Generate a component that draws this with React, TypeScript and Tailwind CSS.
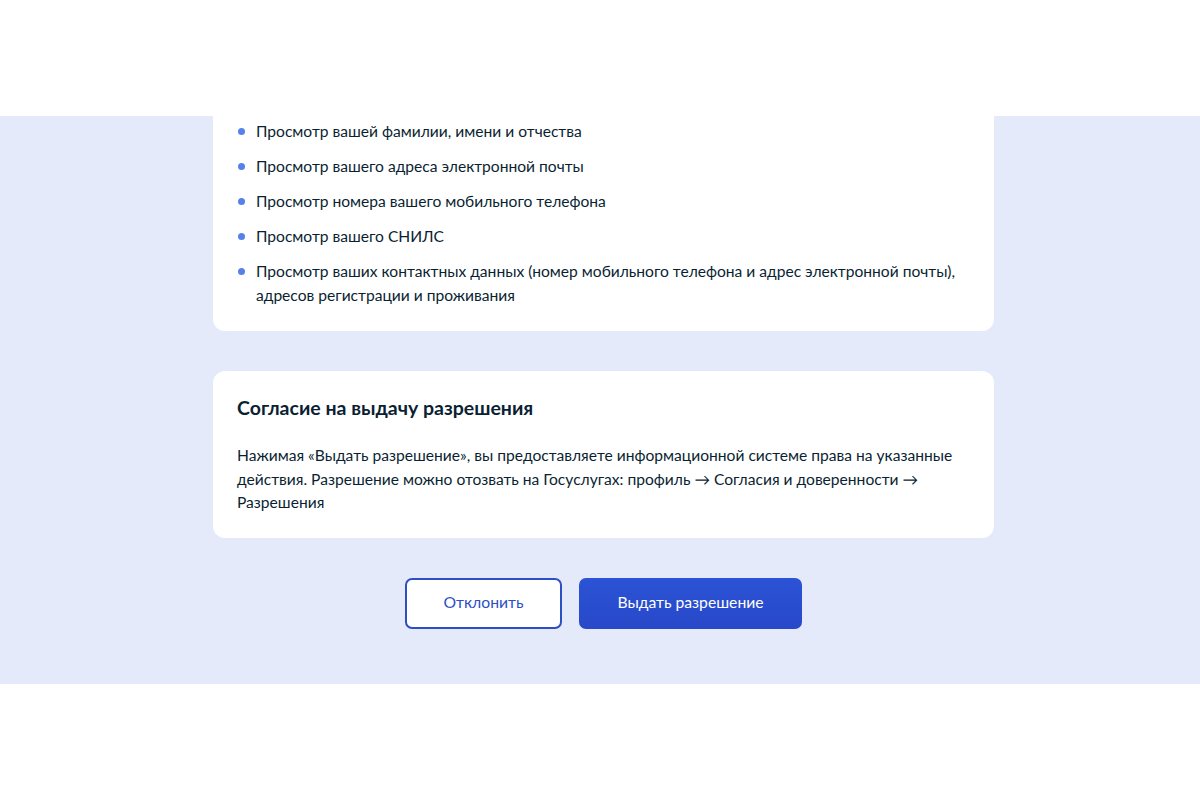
import React from "react";

const items: string[][] = [
  ["Просмотр вашей фамилии, имени и отчества"],
  ["Просмотр вашего адреса электронной почты"],
  ["Просмотр номера вашего мобильного телефона"],
  ["Просмотр вашего СНИЛС"],
  [
    "Просмотр ваших контактных данных (номер мобильного телефона и адрес электронной почты),",
    "адресов регистрации и проживания",
  ],
];

export default function App() {
  return (
    <div
      className="w-[1200px] h-[800px] bg-white flex flex-col text-[#0b1f33]"
      style={{ fontFamily: "Lato, 'Noto Sans', sans-serif" }}
    >
      <div className="h-[116px] shrink-0 bg-white" />
      <div className="h-[568px] shrink-0 bg-[#e4eafa] overflow-hidden flex justify-center pl-[7px]">
        <div className="w-[781px] flex flex-col">
          <div className="bg-white rounded-b-[12px] px-6 pt-[3px] pb-[24px]">
            <ul className="flex flex-col gap-[11px]">
              {items.map((lines, i) => (
                <li key={i} className="flex items-start text-[15.6px] leading-6">
                  <span className="w-[19px] shrink-0 flex pt-[8.5px]">
                    <span className="w-[7px] h-[7px] rounded-full bg-[#5780ec] ml-px" />
                  </span>
                  <span>
                    {lines.map((l, j) => (
                      <span key={j} className="block">
                        {l}
                      </span>
                    ))}
                  </span>
                </li>
              ))}
            </ul>
          </div>
          <div className="mt-[40px] bg-white rounded-[12px] px-6 pt-[23px] pb-[23px]">
            <h2 className="text-[19.5px] leading-7 font-bold">Согласие на выдачу разрешения</h2>
            <p className="mt-[22px] text-[15.6px] leading-[23.5px]">
              Нажимая «Выдать разрешение», вы предоставляете информационной системе права на указанные
              <br />
              действия. Разрешение можно отозвать на Госуслугах: профиль → Согласия и доверенности →
              <br />
              Разрешения
            </p>
          </div>
          <div className="mt-[40px] flex justify-center gap-[17px]">
            <button className="w-[157px] h-[51px] rounded-[7px] border-2 border-[#2d4fc4] bg-white text-[#2d4fc4] text-[15.7px]">
              Отклонить
            </button>
            <button className="w-[223px] h-[51px] rounded-[7px] bg-gradient-to-b from-[#2b53d6] to-[#2848c9] text-white text-[15.7px]">
              Выдать разрешение
            </button>
          </div>
        </div>
      </div>
      <div className="flex-1 bg-white" />
    </div>
  );
}
